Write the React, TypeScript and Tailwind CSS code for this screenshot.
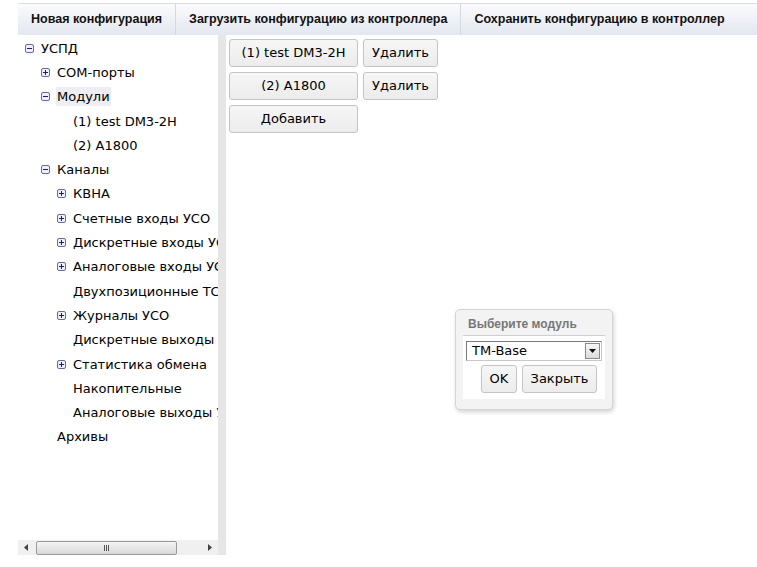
const VERDANA = "font-['DejaVu_Sans',Verdana,sans-serif]";
const ARIAL = "font-['Liberation_Sans',Arial,sans-serif]";

type Node = {
  label: string;
  level: number;
  icon?: "plus" | "minus";
  selected?: boolean;
};

const TREE: Node[] = [
  { label: "УСПД", level: 0, icon: "minus" },
  { label: "COM-порты", level: 1, icon: "plus" },
  { label: "Модули", level: 1, icon: "minus", selected: true },
  { label: "(1) test DM3-2H", level: 2 },
  { label: "(2) A1800", level: 2 },
  { label: "Каналы", level: 1, icon: "minus" },
  { label: "КВНА", level: 2, icon: "plus" },
  { label: "Счетные входы УСО", level: 2, icon: "plus" },
  { label: "Дискретные входы УСО", level: 2, icon: "plus" },
  { label: "Аналоговые входы УСО", level: 2, icon: "plus" },
  { label: "Двухпозиционные ТС", level: 2 },
  { label: "Журналы УСО", level: 2, icon: "plus" },
  { label: "Дискретные выходы УСО", level: 2 },
  { label: "Статистика обмена", level: 2, icon: "plus" },
  { label: "Накопительные", level: 2 },
  { label: "Аналоговые выходы УСО", level: 2 },
  { label: "Архивы", level: 1 },
];

const INDENT = ["pl-[7px]", "pl-[23px]", "pl-[39px]"];

function ToggleIcon({ kind }: { kind: "plus" | "minus" }) {
  return (
    <svg width="9" height="9" viewBox="0 0 9 9" className="shrink-0">
      <rect x="0.5" y="0.5" width="8" height="8" rx="1.5" fill="#eef0f8" stroke="#6a6a9c" />
      <path d="M2 4.5h5" stroke="#1a1a80" />
      {kind === "plus" && <path d="M4.5 2v5" stroke="#1a1a80" />}
    </svg>
  );
}

function TreeRow({ node }: { node: Node }) {
  return (
    <div className={`flex h-[24.3px] items-center whitespace-nowrap ${INDENT[node.level]}`}>
      {node.icon ? <ToggleIcon kind={node.icon} /> : <span className="w-[9px] shrink-0" />}
      <span
        className={`ml-[6px] px-[1px] py-[2px] text-[13px] leading-[15px] text-black ${
          node.selected ? "bg-[#eceef4]" : ""
        }`}
      >
        {node.label}
      </span>
    </div>
  );
}

function MenuItem({ label, last }: { label: string; last?: boolean }) {
  return (
    <div
      className={`flex h-full shrink-0 items-center whitespace-nowrap px-[13px] text-[12.5px] font-bold text-[#111] ${
        last ? "" : "border-r border-[#d4d8e0]"
      }`}
    >
      {label}
    </div>
  );
}

function Btn({ label, className = "" }: { label: string; className?: string }) {
  return (
    <button
      className={`h-[28px] rounded-[3px] border border-[#c4c4c4] bg-gradient-to-b from-[#f6f6f6] to-[#ececec] text-[13px] text-black ${VERDANA} ${className}`}
    >
      {label}
    </button>
  );
}

function HScrollbar() {
  return (
    <div className="flex h-[15px] items-center bg-[#f0f0f0] px-[6px]">
      <svg width="4" height="7" viewBox="0 0 4 7" className="shrink-0">
        <path d="M4 0v7L0 3.5z" fill="#444" />
      </svg>
      <div className="ml-[8px] flex h-[14px] w-[141px] items-center justify-center rounded-[2px] border border-[#9a9a9a] bg-gradient-to-b from-[#f4f4f4] to-[#d8d8d8]">
        <div className="flex gap-[1px]">
          <span className="h-[6px] w-[1px] bg-[#555]" />
          <span className="h-[6px] w-[1px] bg-[#555]" />
          <span className="h-[6px] w-[1px] bg-[#555]" />
        </div>
      </div>
      <div className="flex-1" />
      <svg width="4" height="7" viewBox="0 0 4 7" className="shrink-0">
        <path d="M0 0v7L4 3.5z" fill="#444" />
      </svg>
    </div>
  );
}

function ModuleDialog() {
  return (
    <div
      className={`absolute left-[455px] top-[309px] w-[158px] rounded-[5px] border border-[#d4d4d4] bg-[#f3f3f3] px-[7px] pb-[10px] shadow-[1px_2px_4px_rgba(0,0,0,0.18)] ${ARIAL}`}
    >
      <div className="h-[26px] border-b border-[#cfcfcf] pl-[5px] pt-[5px] text-[12px] font-bold text-[#777]">
        Выберите модуль
      </div>
      <div className="bg-white px-[3px] pb-[6px] pt-[5px]">
        <div className="flex h-[20px] items-center border border-[#7a7a7a] border-r-[#c8c8c8] border-b-[#c8c8c8]">
          <span className={`flex-1 pl-[5px] text-[13px] text-black ${VERDANA}`}>TM-Base</span>
          <div className="mr-[1px] flex h-[16px] w-[15px] items-center justify-center border border-[#8a8a8a] bg-gradient-to-b from-[#f6f6f6] to-[#dcdcdc]">
            <svg width="7" height="4" viewBox="0 0 7 4">
              <path d="M0 0h7L3.5 4z" fill="#111" />
            </svg>
          </div>
        </div>
        <div className="mt-[4px] flex justify-center gap-[5px] pl-[10px]">
          <Btn label="OK" className="w-[36px]" />
          <Btn label="Закрыть" className="w-[75px]" />
        </div>
      </div>
    </div>
  );
}

export default function App() {
  return (
    <div className={`relative h-[567px] w-[757px] overflow-hidden bg-white pl-[18px] pt-[3px] ${ARIAL}`}>
      <div className="flex h-[32px] border-t border-[#dedede] bg-gradient-to-b from-[#fbfbfd] to-[#e3e7f0]">
        <MenuItem label="Новая конфигурация" />
        <MenuItem label="Загрузить конфигурацию из контроллера" />
        <MenuItem label="Сохранить конфигурацию в контроллер" last />
      </div>

      <div className="flex h-[520px]">
        <div className="flex w-[200px] flex-col">
          <div className={`flex-1 overflow-hidden pt-[1px] ${VERDANA}`}>
            {TREE.map((node) => (
              <TreeRow key={node.label} node={node} />
            ))}
          </div>
          <HScrollbar />
        </div>
        <div className="w-[8px] bg-[#e6e6e6]" />
        <div className="flex-1 pl-[3px] pt-[4px]">
          <div className="flex flex-col gap-[5px]">
            <div className="flex gap-[5px]">
              <Btn label="(1) test DM3-2H" className="w-[129px]" />
              <Btn label="Удалить" className="w-[75px]" />
            </div>
            <div className="flex gap-[5px]">
              <Btn label="(2) A1800" className="w-[129px]" />
              <Btn label="Удалить" className="w-[75px]" />
            </div>
            <div className="flex">
              <Btn label="Добавить" className="w-[129px]" />
            </div>
          </div>
        </div>
      </div>

      <ModuleDialog />
    </div>
  );
}
